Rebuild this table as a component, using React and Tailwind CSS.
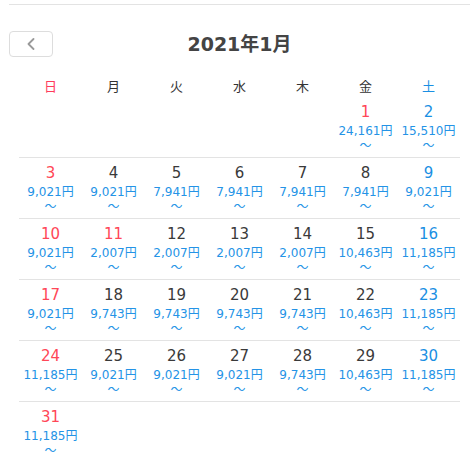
const weekdays = [
  { label: "日", color: "text-[#ff3b5c]" },
  { label: "月", color: "text-[#333]" },
  { label: "火", color: "text-[#333]" },
  { label: "水", color: "text-[#333]" },
  { label: "木", color: "text-[#333]" },
  { label: "金", color: "text-[#333]" },
  { label: "土", color: "text-[#1a8fe3]" },
];

const prices = {
  1: "24,161", 2: "15,510",
  3: "9,021", 4: "9,021", 5: "7,941", 6: "7,941", 7: "7,941", 8: "7,941", 9: "9,021",
  10: "9,021", 11: "2,007", 12: "2,007", 13: "2,007", 14: "2,007", 15: "10,463", 16: "11,185",
  17: "9,021", 18: "9,743", 19: "9,743", 20: "9,743", 21: "9,743", 22: "10,463", 23: "11,185",
  24: "11,185", 25: "9,021", 26: "9,021", 27: "9,021", 28: "9,743", 29: "10,463", 30: "11,185",
  31: "11,185",
};

// 元日, 成人の日
const holidays = [1, 11];

function DayCell({ day, col }) {
  if (!day) return <div />;

  let color = "text-[#3a3a3a]";
  if (col === 0 || holidays.includes(day)) color = "text-[#ff4757]";
  else if (col === 6) color = "text-[#1a8fe3]";

  return (
    <div className="flex flex-col items-center pt-[5px]">
      <span className={`text-[15px] leading-[20px] ${color}`}>{day}</span>
      <span className="mt-[1px] text-[12px] leading-[16px] text-[#2493e6]">
        {prices[day]}円
      </span>
      <span className="text-[12px] leading-[14px] text-[#2493e6]">〜</span>
    </div>
  );
}

export default function App() {
  const cells = [
    ...Array(5).fill(null),
    ...Array.from({ length: 31 }, (_, i) => i + 1),
  ];
  while (cells.length % 7 !== 0) cells.push(null);

  const rows = [];
  for (let i = 0; i < cells.length; i += 7) rows.push(cells.slice(i, i + 7));

  return (
    <div
      className="min-h-[468px] w-[470px] bg-white pl-[9px] pt-[4px]"
      style={{
        fontFamily: '"DejaVu Sans", "Noto Sans CJK JP", sans-serif',
      }}
    >
      <div className="border-t border-[#e3e3e3]" />

      <div className="mt-[25px] grid grid-cols-[44px_1fr_44px] items-center">
        <button className="flex h-[26px] w-[44px] items-center justify-center rounded border border-[#dddddd] bg-white">
          <svg width="8" height="12" viewBox="0 0 8 12" fill="none">
            <polyline
              points="6.5,1 1.5,6 6.5,11"
              stroke="#999"
              strokeWidth="1.8"
              strokeLinecap="round"
              strokeLinejoin="round"
            />
          </svg>
        </button>
        <h1 className="text-center text-[19px] font-bold leading-[28px] text-[#444]">
          2021年1月
        </h1>
        <div />
      </div>

      <div className="mt-[19px] w-[441px] pl-[10px] box-content">
        <div className="grid grid-cols-7">
          {weekdays.map((w) => (
            <div
              key={w.label}
              className={`text-center text-[13px] leading-[20px] ${w.color}`}
            >
              {w.label}
            </div>
          ))}
        </div>

        {rows.map((row, ri) => (
          <div
            key={ri}
            className={`grid h-[61px] grid-cols-7 ${
              ri < rows.length - 1 ? "border-b border-[#e3e3e3]" : ""
            }`}
          >
            {row.map((day, ci) => (
              <DayCell key={ci} day={day} col={ci} />
            ))}
          </div>
        ))}
      </div>
    </div>
  );
}
